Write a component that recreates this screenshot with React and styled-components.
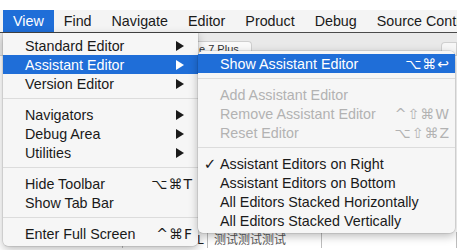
import styled, { createGlobalStyle } from "styled-components";

const GlobalStyle = createGlobalStyle`
    body {
        margin: 0;
        background: #ffffff;
        font-family: 'Liberation Sans', 'DejaVu Sans', sans-serif;
    }
`;

const mainItems = [
    { label: 'Standard Editor', arrow: true },
    { label: 'Assistant Editor', arrow: true, active: true },
    { label: 'Version Editor', arrow: true },
    'sep',
    { label: 'Navigators', arrow: true },
    { label: 'Debug Area', arrow: true },
    { label: 'Utilities', arrow: true },
    'sep',
    { label: 'Hide Toolbar', keys: '⌥⌘T' },
    { label: 'Show Tab Bar' },
    'sep',
    { label: 'Enter Full Screen', keys: '^⌘F' },
];

const subItems = [
    { label: 'Show Assistant Editor', keys: '⌥⌘↩', active: true },
    'sep',
    { label: 'Add Assistant Editor', disabled: true },
    { label: 'Remove Assistant Editor', keys: '^⇧⌘W', disabled: true },
    { label: 'Reset Editor', keys: '⌥⇧⌘Z', disabled: true },
    'sep',
    { label: 'Assistant Editors on Right', checked: true },
    { label: 'Assistant Editors on Bottom' },
    { label: 'All Editors Stacked Horizontally' },
    { label: 'All Editors Stacked Vertically' },
];

function Arrow() {
    return (
        <svg width="8" height="10" viewBox="0 0 8 10">
            <path d="M0 0 L8 5 L0 10 Z" fill="currentColor" />
        </svg>
    );
}

function MenuList({ items }) {
    return items.map((item, i) => {
        if (item === 'sep') return <Separator key={i} />;
        return (
            <Item key={i} $active={item.active} $disabled={item.disabled}>
                <Check>{item.checked ? '✓' : ''}</Check>
                <Label>{item.label}</Label>
                {item.keys && <Keys>{item.keys}</Keys>}
                {item.arrow && <ArrowBox><Arrow /></ArrowBox>}
            </Item>
        );
    });
}

export default function App() {
    const titles = ['View', 'Find', 'Navigate', 'Editor', 'Product', 'Debug', 'Source Control'];

    return (
        <Screen>
            <GlobalStyle />
            <MenuBar>
                {titles.map((t, i) => (
                    <Title key={t} $active={i === 0}>{t}</Title>
                ))}
            </MenuBar>
            <Workspace>
                <Toolbar>
                    <Spacer />
                    <TabButton>e 7 Plus</TabButton>
                    <Grow />
                    <SmallButton />
                </Toolbar>
                <Content>
                    <TableRow>
                        <Cell $w={123} />
                        <Cell $w={85} $end>L</Cell>
                        <Cell $w={114}>测试测试测试</Cell>
                        <Cell $w={135} />
                    </TableRow>
                </Content>
            </Workspace>

            <MainMenu>
                <MenuList items={mainItems} />
            </MainMenu>
            <SubMenu>
                <MenuList items={subItems} />
            </SubMenu>
        </Screen>
    );
}

const Screen = styled.div`
    position: relative;
    width: 457px;
    height: 250px;
    overflow: hidden;
    padding-top: 10px;
    box-sizing: border-box;
    display: flex;
    flex-direction: column;
    background: #ffffff;
`;

const MenuBar = styled.div`
    height: 22px;
    display: flex;
    align-items: stretch;
    padding-left: 3px;
    background: #f4f4f4;
    border-bottom: 1px solid #4a4a4a;
    flex-shrink: 0;
`;

const Title = styled.div`
    display: flex;
    align-items: center;
    padding: 0 10px;
    font-size: 14.3px;
    color: ${p => (p.$active ? '#ffffff' : '#1a1a1a')};
    background: ${p => (p.$active ? '#1f6ed8' : 'transparent')};
    white-space: nowrap;
`;

const Workspace = styled.div`
    flex: 1;
    display: flex;
    flex-direction: column;
    background: #ffffff;
`;

const Toolbar = styled.div`
    height: 22px;
    display: flex;
    align-items: flex-end;
    background: #e9e9e9;
    border-bottom: 1px solid #d0d0d0;
`;

const Spacer = styled.div`
    width: 190px;
`;

const Grow = styled.div`
    flex: 1;
`;

const TabButton = styled.div`
    width: 62px;
    height: 14px;
    padding-left: 8px;
    box-sizing: border-box;
    background: #fafafa;
    border: 1px solid #cfcfcf;
    border-bottom: none;
    border-radius: 4px 4px 0 0;
    font-size: 11px;
    color: #333;
    line-height: 14px;
    overflow: hidden;
`;

const SmallButton = styled.div`
    width: 14px;
    height: 12px;
    background: #f7f7f7;
    border: 1px solid #cfcfcf;
    border-bottom: none;
    border-radius: 4px 0 0 0;
`;

const Content = styled.div`
    flex: 1;
    display: flex;
    flex-direction: column;
    justify-content: flex-end;
`;

const TableRow = styled.div`
    height: 16px;
    display: flex;
    margin-bottom: 2px;
`;

const Cell = styled.div`
    width: ${p => p.$w}px;
    box-sizing: border-box;
    padding: 0 3px 0 6px;
    text-align: ${p => (p.$end ? 'right' : 'left')};
    border-right: 1px solid #bdbdbd;
    font-size: 12px;
    line-height: 16px;
    color: ${p => (p.$end ? '#222' : '#555')};
    font-family: 'Liberation Sans', 'Noto Sans CJK SC', sans-serif;
    white-space: nowrap;
    overflow: hidden;
`;

const Menu = styled.div`
    position: absolute;
    background: #f6f6f6;
    padding: 3px 0;
    box-shadow: 0 3px 10px rgba(0, 0, 0, 0.28), 0 0 0 0.5px rgba(0, 0, 0, 0.15);
    display: flex;
    flex-direction: column;
`;

const MainMenu = styled(Menu)`
    left: 3px;
    top: 33px;
    width: 195px;
    border-radius: 0 0 5px 5px;
`;

const SubMenu = styled(Menu)`
    left: 198px;
    top: 51px;
    width: 257px;
    border-radius: 5px;
    z-index: 2;
`;

const Item = styled.div`
    height: 19px;
    display: flex;
    align-items: center;
    padding-right: 5px;
    font-size: 14.3px;
    color: ${p => (p.$active ? '#ffffff' : p.$disabled ? '#b2b2b2' : '#1a1a1a')};
    background: ${p => (p.$active ? '#1f6ed8' : 'transparent')};
    white-space: nowrap;
`;

const Check = styled.span`
    width: 22px;
    padding-left: 2px;
    box-sizing: border-box;
    text-align: center;
    font-family: 'DejaVu Sans', sans-serif;
    font-size: 15px;
    font-weight: bold;
`;

const Label = styled.span`
    flex: 1;
`;

const Keys = styled.span`
    font-family: 'DejaVu Sans', sans-serif;
    font-size: 14px;
    letter-spacing: 1px;
    padding-right: 0;
`;

const ArrowBox = styled.span`
    display: flex;
    align-items: center;
    padding-right: 9px;
`;

const Separator = styled.div`
    height: 1px;
    margin: 5px 0 6px;
    background: #dcdcdc;
`;
